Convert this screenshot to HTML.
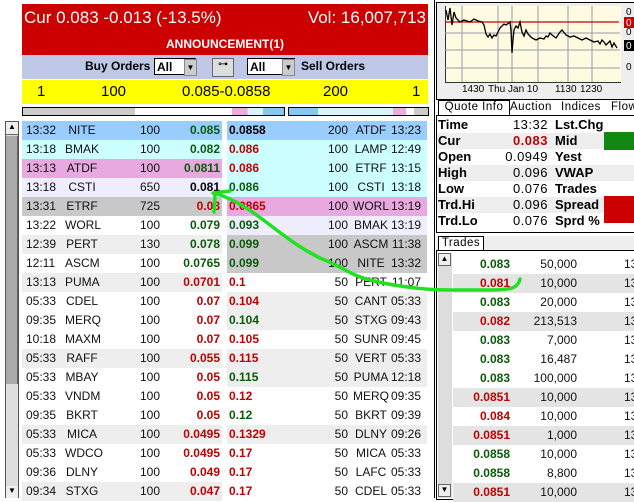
<!DOCTYPE html>
<html><head><meta charset="utf-8"><style>
body{margin:0;width:634px;height:498px;overflow:hidden;background:#fff;font-family:"Liberation Sans",sans-serif;position:relative}
.a{position:absolute}
.r{position:absolute;height:19px;line-height:19px;font-size:12px;color:#111}
.r span{position:absolute;top:0}
.g{color:#0a5a0a;font-weight:bold}.d{color:#c00000;font-weight:bold}.k{color:#000;font-weight:bold}
.q{position:absolute;font-size:13px;height:19px;line-height:19px}
.q span{position:absolute;top:0}
.b{font-weight:bold}
</style></head><body>
<div class="a" style="left:0;top:0;width:434px;height:498px;border-right:1px solid #000"></div>
<div class="a" style="left:22px;top:4px;width:406px;height:51px;background:#cc0000;color:#fff">
 <div class="a" style="left:2px;top:4px;font-size:17px">Cur 0.083 -0.013 (-13.5%)</div>
 <div class="a" style="right:2px;top:4px;font-size:17px">Vol: 16,007,713</div>
 <div class="a" style="left:0;width:406px;top:33px;text-align:center;font-size:12px;font-weight:bold">ANNOUNCEMENT(1)</div>
</div>
<div class="a" style="left:22px;top:55px;width:406px;height:24px;background:#c0c8e8"></div>
<div class="a b" style="left:85px;top:59px;font-size:12px">Buy Orders</div>
<div class="a" style="left:154px;top:58px;width:42px;height:17px;background:#fff;border:1px solid #000;font-size:12px;font-weight:bold;line-height:17px;padding-left:2px;box-sizing:border-box">All</div>
<div class="a" style="left:184px;top:59px;width:11px;height:15px;background:#ccc;border:1px solid #888;font-size:8px;text-align:center;line-height:15px">▼</div>
<div class="a" style="left:212px;top:58px;width:20px;height:17px;background:#ddd;border:1px solid #666;font-size:10px;text-align:center">⊶</div>
<div class="a" style="left:247px;top:58px;width:48px;height:17px;background:#fff;border:1px solid #000;font-size:12px;font-weight:bold;line-height:17px;padding-left:2px;box-sizing:border-box">All</div>
<div class="a" style="left:282px;top:59px;width:11px;height:15px;background:#ccc;border:1px solid #888;font-size:8px;text-align:center;line-height:15px">▼</div>
<div class="a b" style="left:301px;top:59px;font-size:12px">Sell Orders</div>
<div class="a" style="left:22px;top:80px;width:406px;height:24px;background:#ffff00;font-size:15px;line-height:24px">
 <span class="a" style="left:15px">1</span><span class="a" style="left:79px">100</span><span class="a" style="left:160px">0.085-0.0858</span><span class="a" style="left:301px">200</span><span class="a" style="left:390px">1</span>
</div>
<div class="a" style="left:22px;top:107px;width:261px;height:7px;border:1px solid #000;background:linear-gradient(90deg,#ccc 0 43%,#fff 43% 80%,#f0a8e0 80% 86%,#d8f4ff 86% 92%,#88c8f0 92%)"></div>
<div class="a" style="left:288px;top:107px;width:139px;height:7px;border:1px solid #000;background:linear-gradient(90deg,#88c8f0 0 21%,#d8f4ff 21% 75%,#f0a8e0 75% 84%,#fff 84% 90%,#ccc 90%)"></div>
<div class="a" style="left:5px;top:121px;width:14px;height:377px;background:#ddd;border:1px solid #555;box-sizing:border-box"></div>
<div class="a" style="left:6px;top:122px;width:12px;height:12px;background:#eee;border-bottom:1px solid #666;font-size:8px;text-align:center">▲</div>
<div class="a" style="left:6px;top:136px;width:11px;height:248px;background:#aaa;border-right:1px solid #666"></div>
<div class="a" style="left:6px;top:486px;width:12px;height:12px;background:#eee;font-size:8px;text-align:center">▼</div>
<div id="rows"></div>
<div class="a" style="left:436px;top:2px;width:198px;height:96px;border:1px solid #000;border-right:none;background:#eee"></div>
<div class="a" style="left:445px;top:6px;width:175px;height:76px;background:#fffbe0;border-left:1px solid #333;border-bottom:1px solid #333"></div>
<svg class="a" style="left:0;top:0" width="634" height="100">
<g stroke="#99a" stroke-width="1"><line x1="462" y1="6" x2="462" y2="82"/><line x1="498" y1="6" x2="498" y2="82"/><line x1="512" y1="6" x2="512" y2="82"/><line x1="538" y1="6" x2="538" y2="82"/><line x1="568" y1="6" x2="568" y2="82"/><line x1="592" y1="6" x2="592" y2="82"/>
<line x1="445" y1="33" x2="620" y2="33"/><line x1="445" y1="50" x2="620" y2="50"/><line x1="445" y1="68" x2="620" y2="68"/></g>
<line x1="445" y1="22" x2="619" y2="22" stroke="#c00" stroke-width="1.2"/>
<polyline fill="none" stroke="#000" stroke-width="1.3" points="446,10 448,20 450,8 452,25 454,12 456,18 458,20 460,22 464,20 470,22 474,19 478,21 482,22 484,25 486,34 488,37 490,34 492,38 494,35 496,36 498,32 500,28 502,26 504,24 506,25 510,22 511,30 512,53 513,40 514,30 516,26 518,28 520,22 522,32 524,36 526,30 528,34 530,36 532,38 536,40 540,38 544,39 546,36 548,37 550,33 552,35 556,38 560,32 562,30 566,35 570,37 574,36 578,38 582,40 586,38 590,40 594,42 598,41 600,44 602,40 604,42 606,45 610,41 612,47 614,43 617,48"/>
<g font-size="10" fill="#000" font-family="Liberation Sans"><text x="462" y="92">1430</text><text x="488" y="92">Thu Jan 10</text><text x="555" y="92">1130</text><text x="580" y="92">1230</text></g>
<rect x="624" y="17" width="10" height="11" fill="#c00"/><rect x="624" y="40" width="10" height="11" fill="#000"/>
<g font-size="10" font-family="Liberation Sans"><text x="626" y="15">0</text><text x="626" y="26" fill="#fff">0</text><text x="626" y="35">0</text><text x="626" y="49" fill="#fff">0</text><text x="626" y="70">0</text></g>
</svg>
<div class="a" style="left:436px;top:100px;width:198px;height:15px;font-size:11.5px;letter-spacing:.5px">
 <span class="a" style="left:2px;top:0;width:70px;height:14px;border:1px solid #000;border-bottom:none;background:#fff;text-align:center">Quote Info</span>
 <span class="a" style="left:74px;top:1px">Auction</span><span class="a" style="left:125px;top:1px">Indices</span><span class="a" style="left:175px;top:1px">Flow</span>
</div>
<div class="a" style="left:436px;top:115px;width:198px;height:116px;border:1px solid #000;border-right:none"></div>
<div id="qi"></div>
<div class="a" style="left:604px;top:132px;width:30px;height:18px;background:#118811"></div>
<div class="a" style="left:604px;top:196px;width:30px;height:27px;background:#cc0000"></div>
<div class="a" style="left:436px;top:236px;width:198px;height:14px;background:#eee"></div>
<div class="a" style="left:438px;top:236px;width:44px;height:13px;border:1px solid #000;border-bottom:none;background:#fff;font-size:11.5px;text-align:center;letter-spacing:.5px">Trades</div>
<div class="a" style="left:436px;top:250px;width:198px;height:248px;border:1px solid #000;border-right:none"></div>
<div class="a" style="left:438px;top:253px;width:14px;height:245px;background:#ddd"></div>
<div class="a" style="left:438px;top:253px;width:13px;height:13px;background:#eee;border:1px solid #666;font-size:8px;text-align:center;box-sizing:border-box">▲</div>
<div class="a" style="left:438px;top:484px;width:13px;height:13px;background:#eee;border:1px solid #666;font-size:8px;text-align:center;box-sizing:border-box">▼</div>
<div id="tr"></div>
<svg class="a" style="left:0;top:0" width="634" height="498"><g fill="none" stroke="#22e022" stroke-width="3.5" stroke-linecap="round"><path d="M520,279 C518,288 512,290 490,290 L450,290 C420,290 390,285 370,280 C350,275 345,268 320,258 C300,248 290,240 270,225 C250,210 240,202 215,193"/><path d="M213,193 L230,191 M215,195 L214,212"/></g></svg>
<script>
var B=[["13:32","NITE","100","0.085","g","#9cf","0.0858","k","200","ATDF","13:23","#9cf"],
["13:18","BMAK","100","0.082","g","#ccffff","0.086","d","100","LAMP","12:49","#ccffff"],
["13:13","ATDF","100","0.0811","g","#e8a8e0","0.086","d","100","ETRF","13:15","#ccffff"],
["13:18","CSTI","650","0.081","k","#eeeeff","0.086","g","100","CSTI","13:18","#ccffff"],
["13:31","ETRF","725","0.08","d","#c8c8c8","0.0865","d","100","WORL","13:19","#e8a8e0"],
["13:22","WORL","100","0.079","g","#fff","0.093","g","100","BMAK","13:19","#eeeeff"],
["12:39","PERT","130","0.078","g","#eee","0.099","g","100","ASCM","11:38","#c8c8c8"],
["12:11","ASCM","100","0.0765","g","#fff","0.099","g","100","NITE","13:32","#c8c8c8"],
["13:13","PUMA","100","0.0701","d","#eee","0.1","d","50","PERT","11:07","#fff"],
["05:33","CDEL","100","0.07","d","#fff","0.104","d","50","CANT","05:33","#eee"],
["09:35","MERQ","100","0.07","d","#fff","0.104","g","50","STXG","09:43","#eee"],
["10:18","MAXM","100","0.07","d","#fff","0.105","d","50","SUNR","09:45","#fff"],
["05:33","RAFF","100","0.055","d","#eee","0.115","d","50","VERT","05:33","#eee"],
["05:33","MBAY","100","0.05","d","#fff","0.115","g","50","PUMA","12:18","#eee"],
["05:33","VNDM","100","0.05","d","#fff","0.12","d","50","MERQ","09:35","#fff"],
["09:35","BKRT","100","0.05","d","#fff","0.12","g","50","BKRT","09:39","#fff"],
["05:33","MICA","100","0.0495","d","#eee","0.1329","d","50","DLNY","09:26","#eee"],
["05:33","WDCO","100","0.0495","d","#fff","0.17","d","50","MICA","05:33","#fff"],
["09:36","DLNY","100","0.049","d","#fff","0.17","d","50","LAFC","05:33","#fff"],
["09:34","STXG","100","0.047","d","#eee","0.17","d","50","CDEL","05:33","#fff"]];
var h="";B.forEach(function(r,i){var y=121+i*19;
h+='<div class="r" style="left:22px;top:'+y+'px;width:200px;background:'+r[5]+'"><span style="left:4px">'+r[0]+'</span><span style="left:43px;width:34px;text-align:center">'+r[1]+'</span><span style="right:62px">'+r[2]+'</span><span class="'+r[4]+'" style="right:2px">'+r[3]+'</span></div>';
h+='<div class="r" style="left:227px;top:'+y+'px;width:200px;background:'+r[11]+'"><span class="'+r[7]+'" style="left:2px">'+r[6]+'</span><span style="right:79px">'+r[8]+'</span><span style="left:124px;width:40px;text-align:center">'+r[9]+'</span><span style="right:6px">'+r[10]+'</span></div>';});
document.getElementById("rows").innerHTML=h;
var Q=[["Time","13:32","","Lst.Chg","#fff"],["Cur","0.083","d","Mid","#eee"],[" Open","0.0949","","Yest","#fff"],["High","0.096","","VWAP","#eee"],["Low","0.076","","Trades","#fff"],["Trd.Hi","0.096","","Spread","#eee"],["Trd.Lo","0.076","","Sprd %","#fff"]];
h="";Q.forEach(function(q,i){var y=117+i*16;h+='<div class="q" style="left:437px;top:'+y+'px;width:197px;height:16px;line-height:16px;background:'+q[4]+'"><span class="b" style="left:1px">'+q[0]+'</span><span class="'+q[2]+'" style="right:86px;letter-spacing:.5px">'+q[1]+'</span><span class="b" style="left:118px">'+q[3]+'</span></div>';});
document.getElementById("qi").innerHTML=h;
var T=[["0.083","g","50,000",0],["0.081","d","10,000",1],["0.083","g","20,000",0],["0.082","d","213,513",1],["0.083","g","7,000",0],["0.083","g","16,487",0],["0.083","g","100,000",0],["0.0851","d","10,000",1],["0.084","d","10,000",0],["0.0851","d","1,000",1],["0.0858","g","10,000",0],["0.0858","g","8,800",0],["0.0851","d","10,000",1]];
h="";T.forEach(function(t,i){var y=255+i*19;h+='<div class="r" style="left:453px;top:'+y+'px;width:181px;background:'+(t[3]?"#e4e4e4":"#fff")+'"><span class="'+t[1]+'" style="right:124px">'+t[0]+'</span><span style="right:57px">'+t[2]+'</span><span style="left:171px">13</span></div>';});
document.getElementById("tr").innerHTML=h;
</script>
</body></html>
